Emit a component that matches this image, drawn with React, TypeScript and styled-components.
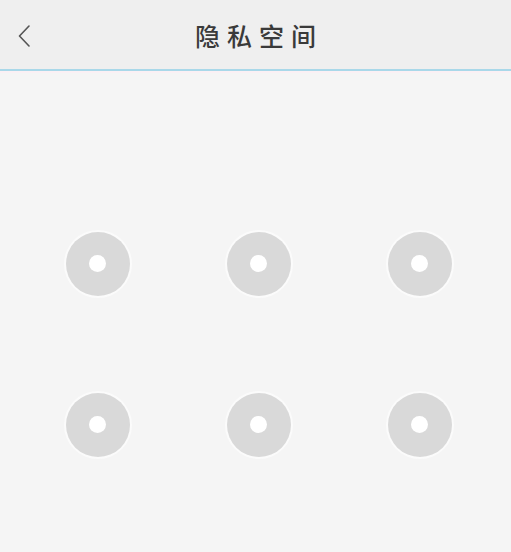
import React from "react";
import styled, { createGlobalStyle } from "styled-components";

const Global = createGlobalStyle`
  html, body {
    margin: 0;
    padding: 0;
    background: #f5f5f5;
    overflow: hidden;
  }
  body {
    font-family: "Noto Sans CJK SC", "Noto Sans", sans-serif;
  }
`;

const Page = styled.div`
  width: 511px;
  height: 552px;
  overflow: hidden;
  background: #f5f5f5;
  display: flex;
  flex-direction: column;
`;

const Header = styled.header`
  height: 69px;
  flex: none;
  background: #efefef;
  display: grid;
  grid-template-columns: 60px 1fr 60px;
  align-items: center;
  border-bottom: 2px solid #a9d8e9;
  box-shadow: 0 2px 0 #fbf0f4;
`;

const BackButton = styled.button`
  border: none;
  background: transparent;
  padding: 2px 0 0 18px;
  height: 100%;
  display: flex;
  align-items: center;
  justify-content: flex-start;
  cursor: pointer;
`;

const Title = styled.h1`
  margin: 0;
  text-align: center;
  font-family: "Noto Sans CJK SC", sans-serif;
  font-size: 25px;
  font-weight: 500;
  letter-spacing: 7px;
  text-indent: 7px;
  color: #3a3a3a;
  line-height: 1;
  padding-top: 2px;
`;

const Pad = styled.div`
  display: grid;
  grid-template-columns: repeat(3, 161px);
  grid-auto-rows: 161px;
  justify-content: center;
  padding: 112px 0 0 6px;
`;

const Cell = styled.div`
  display: flex;
  align-items: center;
  justify-content: center;
`;

const Node = styled.div`
  width: 64px;
  height: 64px;
  border-radius: 50%;
  background: #d9d9d9;
  box-shadow: 0 0 0 2px #fbfbfb;
  display: flex;
  align-items: center;
  justify-content: center;
`;

const Dot = styled.div`
  width: 17px;
  height: 17px;
  border-radius: 50%;
  background: #ffffff;
`;

export default function App() {
  return (
    <Page>
      <Global />
      <Header>
        <BackButton aria-label="back">
          <svg width="12" height="22" viewBox="0 0 12 22" fill="none">
            <path d="M11 1 L1.5 11 L11 21" stroke="#555" strokeWidth="1.6" strokeLinecap="round" strokeLinejoin="round" />
          </svg>
        </BackButton>
        <Title>隐私空间</Title>
        <div />
      </Header>
      <Pad>
        {Array.from({ length: 9 }).map((_, i) => (
          <Cell key={i}>
            <Node>
              <Dot />
            </Node>
          </Cell>
        ))}
      </Pad>
    </Page>
  );
}
